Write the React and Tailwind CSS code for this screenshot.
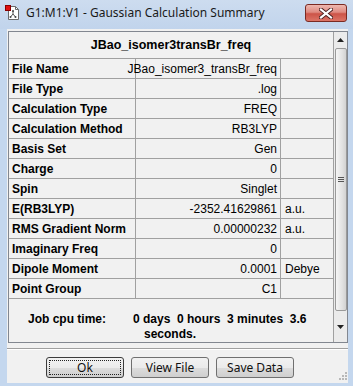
import React from "react";

const rows = [
   { label: "File Name", value: "JBao_isomer3_transBr_freq", unit: "" },
   { label: "File Type", value: ".log", unit: "" },
   { label: "Calculation Type", value: "FREQ", unit: "" },
   { label: "Calculation Method", value: "RB3LYP", unit: "" },
   { label: "Basis Set", value: "Gen", unit: "" },
   { label: "Charge", value: "0", unit: "" },
   { label: "Spin", value: "Singlet", unit: "" },
   { label: "E(RB3LYP)", value: "-2352.41629861", unit: "a.u." },
   { label: "RMS Gradient Norm", value: "0.00000232", unit: "a.u." },
   { label: "Imaginary Freq", value: "0", unit: "" },
   { label: "Dipole Moment", value: "0.0001", unit: "Debye" },
   { label: "Point Group", value: "C1", unit: "" },
];

const AppIcon = () => (
   <svg width="16" height="16" viewBox="0 0 16 16" className="shrink-0">
      <path d="M3.5 1.5h7l3 3v10h-10z" fill="#fff" stroke="#6b6b6b" />
      <path d="M10.5 1.5v3h3" fill="none" stroke="#6b6b6b" />
      <line x1="8" y1="6" x2="8" y2="9" stroke="#555" />
      <line x1="8" y1="9" x2="5.5" y2="12" stroke="#555" />
      <line x1="8" y1="9" x2="10.5" y2="12" stroke="#555" />
      <circle cx="8" cy="6" r="1" fill="#444" />
      <circle cx="5.5" cy="12" r="1" fill="#444" />
      <circle cx="10.5" cy="12" r="1" fill="#444" />
      <rect x="0.5" y="0.5" width="5" height="5" fill="#e01010" stroke="#8a0000" />
   </svg>
);

const Button = ({ children, focused }) => (
   <div className={"w-[78px] h-[21px] rounded-[3px] border flex items-center justify-center bg-[linear-gradient(to_bottom,#f2f2f2_0%,#ebebeb_50%,#dddddd_50%,#cfcfcf_100%)] " + (focused ? "border-[#3c3c3c]" : "border-[#707070]")}>
      <div className={"w-[72px] h-[15px] flex items-center justify-center text-[12px] text-[#111] " + (focused ? "border border-dotted border-[#222]" : "")}>
         {children}
      </div>
   </div>
);

export default function App() {
   return (
      <div className="w-[353px] h-[386px] bg-[#c4d7ee] flex flex-col overflow-hidden" style={{ fontFamily: "'Liberation Sans', Arial, sans-serif" }}>
         {/* title bar */}
         <div className="h-[29px] flex items-start bg-[linear-gradient(to_bottom,#cddcef,#c1d4ec)]">
            <div className="flex items-center gap-[5px] pl-[5px] pt-[5px]">
               <AppIcon />
               <span className="text-[12px] text-[#1a1a1a] leading-none" style={{ fontFamily: "'Noto Sans', 'Open Sans', sans-serif" }}>
                  G1:M1:V1 - Gaussian Calculation Summary
               </span>
            </div>
            <div className="ml-auto mr-[6px] mt-[4px] w-[42px] h-[18px] rounded-[3px] border border-[#7a2a22] bg-[linear-gradient(to_bottom,#eeb8b0_0%,#df8a80_45%,#cc5448_55%,#dc7466_100%)] flex items-center justify-center">
               <svg width="14" height="11" viewBox="0 0 14 11">
                  <path d="M2 1.5l10 8M12 1.5l-10 8" stroke="#4a2020" strokeWidth="4" strokeLinecap="square" />
                  <path d="M2 1.5l10 8M12 1.5l-10 8" stroke="#fff" strokeWidth="2.2" strokeLinecap="square" />
               </svg>
            </div>
         </div>

         {/* client area */}
         <div className="ml-[7px] mr-[5px] h-[354px] bg-[#f1f1f1] flex flex-col">
            <div className="ml-[1px] mt-[2px] w-[340px] h-[312px] border border-[#828790] flex">
               <div className="w-[324px] flex flex-col">
                  <div className="h-[26px] flex items-center justify-center font-bold text-[12.5px] text-black pt-[1px]">
                     JBao_isomer3transBr_freq
                  </div>
                  {rows.map((r, i) => (
                     <div key={r.label} className={"h-[20px] flex border-t border-[#a0a0a0] text-[12px] text-black " + (i === rows.length - 1 ? "h-[21px] border-b" : "")}>
                        <div className="w-[126px] pl-[3px] flex items-center font-bold">{r.label}</div>
                        <div className="w-[145px] border-l border-[#a0a0a0] pr-[3px] flex items-center justify-end">{r.value}</div>
                        <div className="flex-1 border-l border-[#a0a0a0] pl-[4px] flex items-center">{r.unit}</div>
                     </div>
                  ))}
                  <div className="flex-1 pt-[13px] text-[12px] font-bold leading-[15px] text-black">
                     <div className="flex">
                        <span className="pl-[19px] w-[124px]">Job cpu time:</span>
                        <span className="whitespace-pre">0 days  0 hours  3 minutes  3.6</span>
                     </div>
                     <div className="pl-[135px]">seconds.</div>
                  </div>
               </div>
               {/* scrollbar */}
               <div className="w-[14px] border-l border-[#a0a0a0] bg-[#ebebeb] flex flex-col items-center">
                  <div className="h-[16px] flex items-center justify-center">
                     <svg width="7" height="4" viewBox="0 0 7 4"><path d="M3.5 0L7 4H0z" fill="#222" /></svg>
                  </div>
                  <div className="w-[12px] h-[263px] rounded-[2px] border border-[#9a9a9a] bg-[linear-gradient(to_right,#f5f5f5,#e2e2e2_60%,#d2d2d2)] flex flex-col items-center justify-center gap-[1px]">
                     <div className="w-[6px] h-[1px] bg-[#555]" />
                     <div className="w-[6px] h-[1px] bg-[#555]" />
                     <div className="w-[6px] h-[1px] bg-[#555]" />
                  </div>
                  <div className="flex-1 flex items-center justify-center">
                     <svg width="7" height="4" viewBox="0 0 7 4"><path d="M0 0H7L3.5 4z" fill="#222" /></svg>
                  </div>
               </div>
            </div>

            <div className="mt-[5px] h-[1px] bg-[#a0a0a0]" />
            <div className="h-[1px] bg-white" />

            <div className="mt-[7px] flex pl-[39px] gap-[7px] relative" style={{ fontFamily: "'Noto Sans', 'Open Sans', sans-serif" }}>
               <Button focused>Ok</Button>
               <Button>View File</Button>
               <Button>Save Data</Button>
               <svg className="absolute right-[0px] top-[14px]" width="10" height="10" viewBox="0 0 10 10">
                  <rect x="7" y="1" width="2" height="2" fill="#b8b8b8" />
                  <rect x="4" y="4" width="2" height="2" fill="#b8b8b8" />
                  <rect x="7" y="4" width="2" height="2" fill="#b8b8b8" />
                  <rect x="1" y="7" width="2" height="2" fill="#b8b8b8" />
                  <rect x="4" y="7" width="2" height="2" fill="#b8b8b8" />
                  <rect x="7" y="7" width="2" height="2" fill="#b8b8b8" />
               </svg>
            </div>
         </div>
      </div>
   );
}
